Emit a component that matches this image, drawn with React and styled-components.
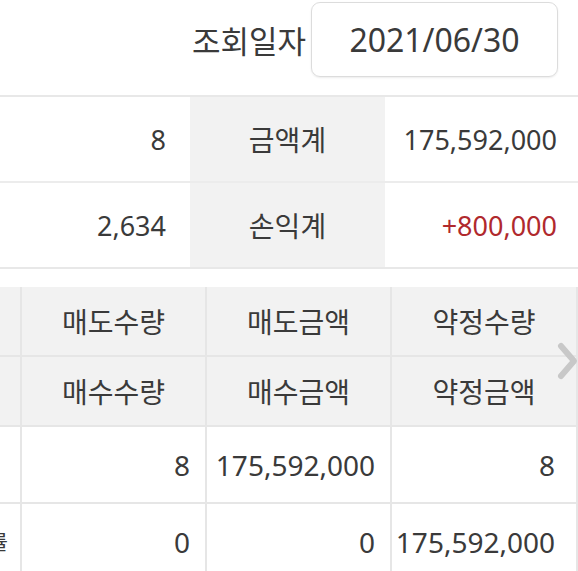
import React from "react";
import styled, { createGlobalStyle } from "styled-components";

const GlobalStyle = createGlobalStyle`
  html, body {
    margin: 0;
    padding: 0;
    background: #fff;
    overflow: hidden;
  }
  body {
    font-family: "Noto Sans", "Noto Sans CJK KR", sans-serif;
    color: #3a3a3a;
  }
`;

const Page = styled.div`
  width: 578px;
  height: 571px;
  overflow: hidden;
  position: relative;
`;

const SearchBar = styled.div`
  display: flex;
  justify-content: flex-end;
  align-items: center;
  gap: 5px;
  height: 75px;
  padding: 2px 20px 18px 0;
  border-bottom: 2px solid #e8e8e8;
`;

const Label = styled.span`
  font-size: 31px;
  color: #3a3a3a;
`;

const DateBox = styled.div`
  width: 245px;
  height: 73px;
  display: flex;
  align-items: center;
  justify-content: center;
  border: 1px solid #dcdcdc;
  border-radius: 9px;
  box-shadow: 0 1px 2px rgba(0, 0, 0, 0.08);
  font-size: 32px;
  color: #3a3a3a;
`;

const Summary = styled.div`
  display: grid;
  grid-template-columns: 190px 195px 1fr;
  border-bottom: 2px solid #e8e8e8;
`;

const SumCell = styled.div`
  height: 84px;
  display: flex;
  align-items: center;
  justify-content: ${(p) => (p.$head ? "center" : "flex-end")};
  padding-right: ${(p) => (p.$head ? "0" : p.$pr || "24px")};
  background: ${(p) => (p.$head ? "#f2f2f2" : "#fff")};
  border-bottom: ${(p) => (p.$last ? "none" : "2px solid #ececec")};
  font-size: ${(p) => (p.$head ? "28px" : "27px")};
  color: ${(p) => (p.$red ? "#b0292d" : "#3a3a3a")};
`;

const TableWrap = styled.div`
  margin-top: 18px;
  position: relative;
`;

const Grid = styled.div`
  display: grid;
  grid-template-columns: 22px 185px 185px 1fr;
`;

const Cell = styled.div`
  height: ${(p) => p.$h}px;
  display: flex;
  align-items: center;
  justify-content: ${(p) => (p.$head ? "center" : "flex-end")};
  padding-right: ${(p) => (p.$head ? "0" : p.$pr || "15px")};
  background: ${(p) => (p.$head ? "#f2f2f2" : "#fff")};
  border-right: 2px solid #e6e6e6;
  border-bottom: 2px solid #e6e6e6;
  font-size: 28px;
  color: #3a3a3a;
  white-space: nowrap;
  overflow: hidden;
  box-sizing: border-box;
`;

const EdgeCell = styled(Cell)`
  justify-content: flex-end;
  padding-right: 12px;
  font-size: 20px;
`;

const Chevron = styled.div`
  position: absolute;
  right: 0;
  top: 50px;
  width: 22px;
  height: 48px;
  display: flex;
  align-items: center;
`;

const heads = [
  ["매도수량", "매도금액", "약정수량"],
  ["매수수량", "매수금액", "약정금액"],
];

const rows = [
  { edge: "", vals: ["8", "175,592,000", "8"] },
  { edge: "수익률", vals: ["0", "0", "175,592,000"] },
];

export default function App() {
  return (
    <Page>
      <GlobalStyle />
      <SearchBar>
        <Label>조회일자</Label>
        <DateBox>2021/06/30</DateBox>
      </SearchBar>
      <Summary>
        <SumCell>8</SumCell>
        <SumCell $head>금액계</SumCell>
        <SumCell $pr="21px">175,592,000</SumCell>
        <SumCell $last>2,634</SumCell>
        <SumCell $head $last>손익계</SumCell>
        <SumCell $last $pr="21px" $red>+800,000</SumCell>
      </Summary>
      <TableWrap>
        <Grid>
          {heads.map((h, i) => (
            <React.Fragment key={i}>
              <Cell $head $h={70} />
              {h.map((t) => (
                <Cell key={t} $head $h={70}>
                  {t}
                </Cell>
              ))}
            </React.Fragment>
          ))}
          {rows.map((r, i) => (
            <React.Fragment key={i}>
              <EdgeCell $h={77}>{r.edge}</EdgeCell>
              {r.vals.map((v, j) => (
                <Cell key={j} $h={77} $pr={j === 2 ? "21px" : undefined}>
                  {v}
                </Cell>
              ))}
            </React.Fragment>
          ))}
        </Grid>
        <Chevron>
          <svg width="22" height="48" viewBox="0 0 22 48">
            <path
              d="M5 9 L18 24 L5 39"
              fill="none"
              stroke="#c8c8c8"
              strokeWidth="6"
              strokeLinecap="round"
              strokeLinejoin="round"
            />
          </svg>
        </Chevron>
      </TableWrap>
    </Page>
  );
}
